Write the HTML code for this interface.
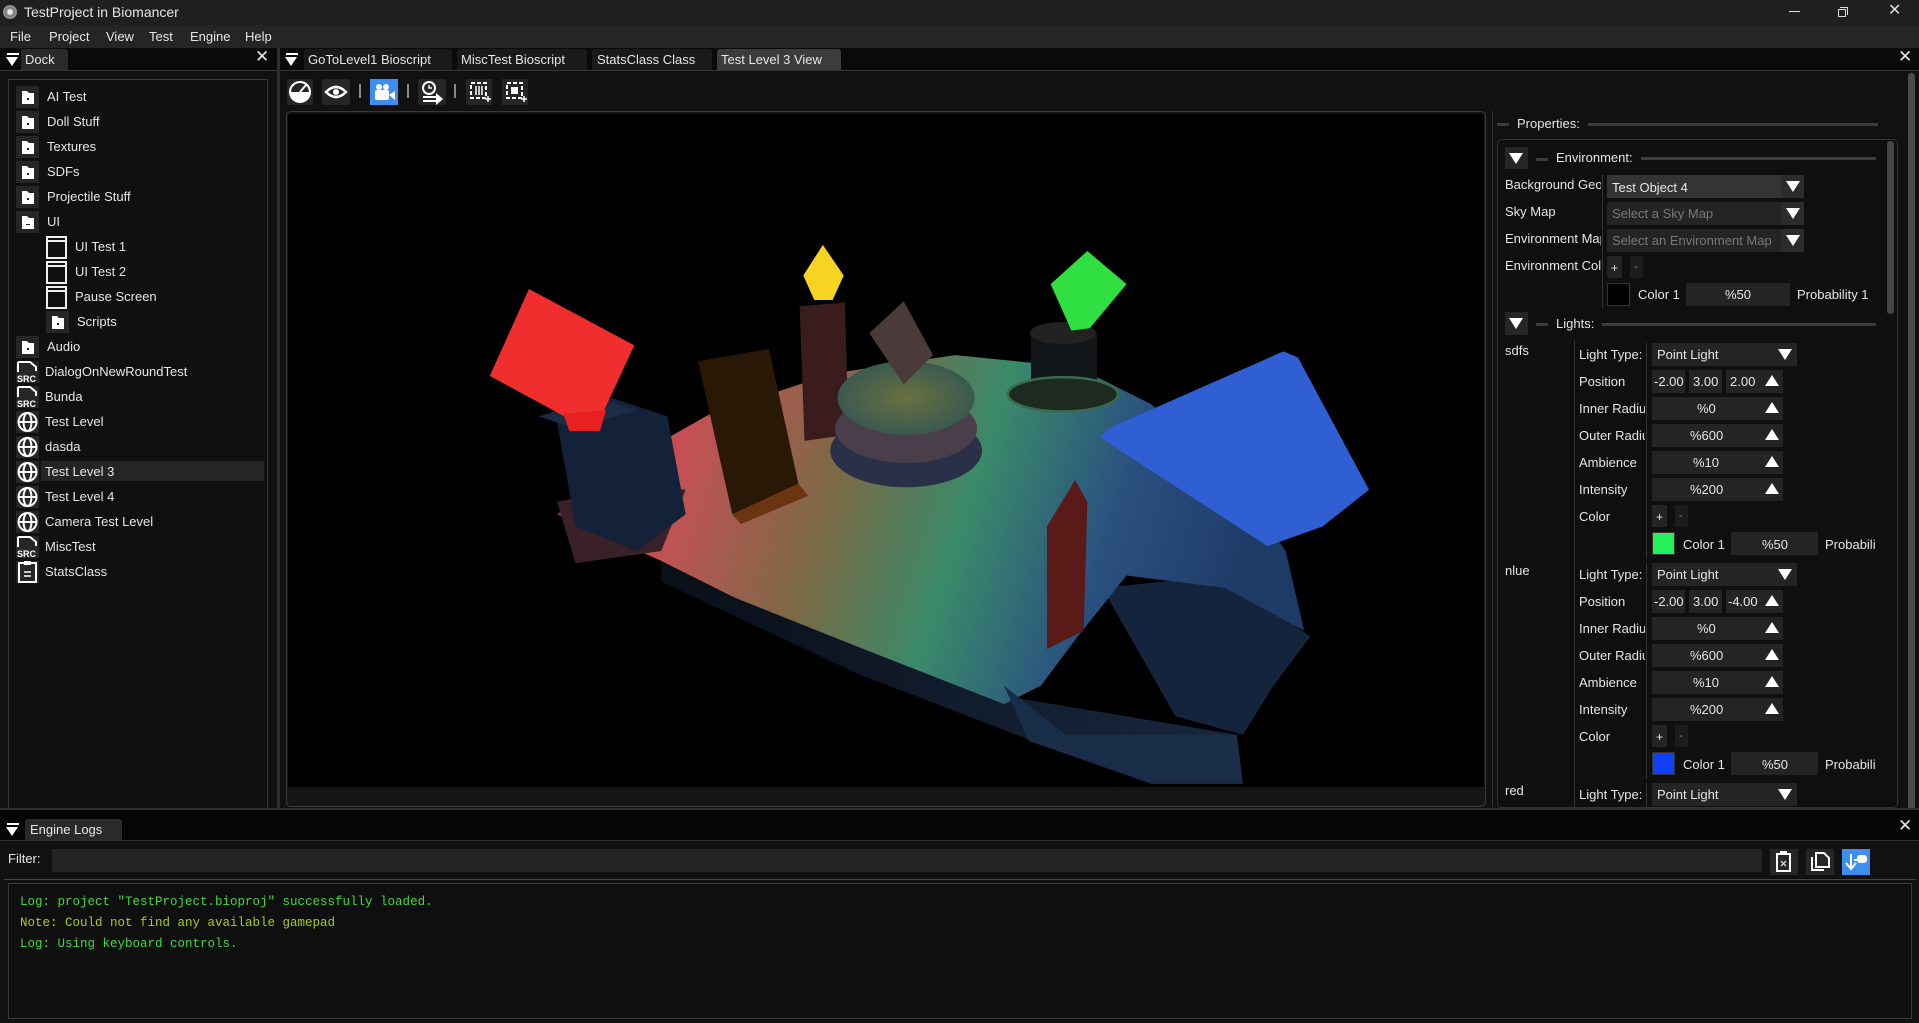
<!DOCTYPE html>
<html><head><meta charset="utf-8">
<style>
*{margin:0;padding:0;box-sizing:border-box}
html,body{width:1919px;height:1023px;overflow:hidden;background:#111;font-family:"Liberation Sans",sans-serif;color:#e6e6e6;font-size:13px}
.a{position:absolute}
.t{position:absolute;white-space:nowrap;line-height:16px}
.box{position:absolute;background:#242424}
.tri{position:absolute;width:0;height:0;border-left:7px solid transparent;border-right:7px solid transparent}
.dn{border-top:12px solid #fff}
.up{border-bottom:12px solid #fff}
.mono{font-family:"Liberation Mono",monospace;font-size:12.5px}
</style></head><body>
<!-- title bar -->
<div class="a" style="left:0;top:0;width:1919px;height:25px;background:#1f1f1f"></div>
<div class="a" style="left:3px;top:5px;width:14px;height:14px;border-radius:50%;background:radial-gradient(#eee 20%,#777 40%,#999 70%,#555)"></div>
<div class="t" style="left:24px;top:4px;font-size:14px">TestProject in Biomancer</div>
<div class="a" style="left:1789px;top:11px;width:11px;height:1px;background:#ddd"></div>
<div class="a" style="left:1838px;top:9px;width:8px;height:8px;border:1px solid #ddd"></div>
<div class="a" style="left:1840px;top:7px;width:8px;height:8px;border-top:1px solid #ddd;border-right:1px solid #ddd"></div>
<div class="t" style="left:1888px;top:3px;font-size:16px;color:#ddd">✕</div>
<!-- menu -->
<div class="a" style="left:0;top:25px;width:1919px;height:23px;background:#252525"></div>
<div class="t" style="left:10px;top:29px">File</div>
<div class="t" style="left:49px;top:29px">Project</div>
<div class="t" style="left:106px;top:29px">View</div>
<div class="t" style="left:149px;top:29px">Test</div>
<div class="t" style="left:190px;top:29px">Engine</div>
<div class="t" style="left:245px;top:29px">Help</div>
<!-- dock tab row -->
<div class="a" style="left:0;top:48px;width:1919px;height:22px;background:#0a0a0a"></div>
<div class="a" style="left:0;top:70px;width:1919px;height:1px;background:#333"></div>
<div class="a" style="left:7px;top:53px;width:12px;height:2px;background:#fff"></div>
<div class="tri dn" style="left:6px;top:57px;border-top-width:9px;border-left-width:6px;border-right-width:6px"></div>
<div class="a" style="left:21px;top:49px;width:47px;height:21px;background:#2a2a2a;border-radius:3px 3px 0 0"></div>
<div class="t" style="left:25px;top:52px">Dock</div>
<div class="t" style="left:255px;top:49px;font-size:17px">✕</div>
<div class="a" style="left:277px;top:48px;width:3px;height:762px;background:#2e2e2e"></div>
<div class="a" style="left:286px;top:53px;width:12px;height:2px;background:#fff"></div>
<div class="tri dn" style="left:285px;top:57px;border-top-width:9px;border-left-width:6px;border-right-width:6px"></div>
<div class="a" style="left:304px;top:49px;width:148px;height:21px;background:#1a1a1a;border-radius:3px 3px 0 0"></div>
<div class="t" style="left:308px;top:52px">GoToLevel1 Bioscript</div>
<div class="a" style="left:457px;top:49px;width:130px;height:21px;background:#1a1a1a;border-radius:3px 3px 0 0"></div>
<div class="t" style="left:461px;top:52px">MiscTest Bioscript</div>
<div class="a" style="left:592px;top:49px;width:120px;height:21px;background:#1a1a1a;border-radius:3px 3px 0 0"></div>
<div class="t" style="left:597px;top:52px">StatsClass Class</div>
<div class="a" style="left:717px;top:49px;width:124px;height:21px;background:#3c3c3c;border-radius:3px 3px 0 0"></div>
<div class="t" style="left:721px;top:52px">Test Level 3 View</div>
<div class="t" style="left:1898px;top:49px;font-size:17px">✕</div>
<!-- left list -->
<div class="a" style="left:8px;top:79px;width:260px;height:730px;border:1px solid #3a3a3a;background:#101010"></div>
<div class="a" style="left:41px;top:461px;width:223px;height:20px;background:#252525"></div>
<svg class="a" style="left:0;top:0" width="280" height="600">
<defs>
<g id="fold"><rect x="0" y="0" width="23" height="22" fill="#262626"/><path d="M6 5h5l2 2h5v11H6z" fill="#fff"/><rect x="11" y="12" width="2" height="2" fill="#222"/></g>
<g id="win"><rect x="2" y="1" width="19" height="21" fill="none" stroke="#eee" stroke-width="2"/><line x1="2" y1="5" x2="21" y2="5" stroke="#eee" stroke-width="2"/></g>
<g id="src"><rect x="0" y="0" width="23" height="22" fill="#262626"/><path d="M2 1h12l6 5v4M2 1v10" fill="none" stroke="#fff" stroke-width="2"/><text x="1" y="21" font-family="Liberation Sans" font-weight="bold" font-size="9" fill="#fff">SRC</text></g>
<g id="glob"><rect x="0" y="0" width="23" height="22" fill="#262626"/><circle cx="11.5" cy="11" r="9" fill="none" stroke="#fff" stroke-width="2"/><ellipse cx="11.5" cy="11" rx="4" ry="9" fill="none" stroke="#fff" stroke-width="2"/><line x1="2.5" y1="11" x2="20.5" y2="11" stroke="#fff" stroke-width="2"/></g>
</defs>
<use href="#fold" x="16" y="86"/><use href="#fold" x="16" y="111"/><use href="#fold" x="16" y="136"/><use href="#fold" x="16" y="161"/><use href="#fold" x="16" y="186"/>
<g transform="translate(16,211)"><rect width="23" height="22" fill="#262626"/><path d="M6 5h5l2 2h5v11H6z" fill="#fff"/><rect x="10" y="13" width="4" height="1" fill="#222"/></g>
<use href="#win" x="45" y="236"/><use href="#win" x="45" y="261"/><use href="#win" x="45" y="286"/>
<use href="#fold" x="46" y="311"/><use href="#fold" x="16" y="336"/>
<use href="#src" x="16" y="361"/><use href="#src" x="16" y="386"/>
<use href="#glob" x="16" y="411"/><use href="#glob" x="16" y="436"/><use href="#glob" x="16" y="461"/><use href="#glob" x="16" y="486"/><use href="#glob" x="16" y="511"/>
<use href="#src" x="16" y="536"/>
<g transform="translate(16,561)"><rect width="23" height="22" fill="#262626"/><rect x="3" y="2" width="17" height="19" fill="none" stroke="#fff" stroke-width="2"/><rect x="8" y="0" width="7" height="4" fill="#fff"/><line x1="8" y1="11" x2="15" y2="11" stroke="#fff" stroke-width="1.5"/><line x1="8" y1="15" x2="15" y2="15" stroke="#fff" stroke-width="1.5"/></g>
</svg>
<div class="t" style="left:47px;top:89px">AI Test</div>
<div class="t" style="left:47px;top:114px">Doll Stuff</div>
<div class="t" style="left:47px;top:139px">Textures</div>
<div class="t" style="left:47px;top:164px">SDFs</div>
<div class="t" style="left:47px;top:189px">Projectile Stuff</div>
<div class="t" style="left:47px;top:214px">UI</div>
<div class="t" style="left:75px;top:239px">UI Test 1</div>
<div class="t" style="left:75px;top:264px">UI Test 2</div>
<div class="t" style="left:75px;top:289px">Pause Screen</div>
<div class="t" style="left:77px;top:314px">Scripts</div>
<div class="t" style="left:47px;top:339px">Audio</div>
<div class="t" style="left:45px;top:364px">DialogOnNewRoundTest</div>
<div class="t" style="left:45px;top:389px">Bunda</div>
<div class="t" style="left:45px;top:414px">Test Level</div>
<div class="t" style="left:45px;top:439px">dasda</div>
<div class="t" style="left:45px;top:464px">Test Level 3</div>
<div class="t" style="left:45px;top:489px">Test Level 4</div>
<div class="t" style="left:45px;top:514px">Camera Test Level</div>
<div class="t" style="left:45px;top:539px">MiscTest</div>
<div class="t" style="left:45px;top:564px">StatsClass</div>
<!-- toolbar -->
<svg class="a" style="left:280px;top:72px" width="260" height="40">
<rect x="7" y="7" width="26" height="26" fill="#262626"/><circle cx="20" cy="20" r="10" fill="#fff"/><path d="M11 20a9 9 0 0 1 18 0z" fill="#262626"/><circle cx="20" cy="20" r="10" fill="none" stroke="#fff" stroke-width="2"/><line x1="20" y1="20" x2="26" y2="13" stroke="#fff" stroke-width="2"/>
<rect x="42" y="7" width="28" height="26" fill="#262626"/><path d="M46 20q10-10 20 0q-10 10-20 0z" fill="none" stroke="#fff" stroke-width="2.5"/><circle cx="56" cy="20" r="3" fill="#fff"/>
<rect x="79" y="12" width="2" height="14" fill="#888"/>
<rect x="90" y="7" width="28" height="26" fill="#3d8ef0"/><circle cx="99" cy="15" r="3" fill="#fff"/><circle cx="106" cy="15" r="3" fill="#fff"/><rect x="95" y="18" width="14" height="10" rx="2" fill="#fff"/><path d="M109 23l6-4v9z" fill="#fff"/>
<rect x="127" y="12" width="2" height="14" fill="#888"/>
<rect x="138" y="7" width="28" height="26" fill="#262626"/><circle cx="149" cy="16" r="6" fill="none" stroke="#fff" stroke-width="2"/><path d="M149 13v3h3" stroke="#fff" fill="none" stroke-width="1.5"/><path d="M143 25h13M143 29h13" stroke="#fff" stroke-width="2"/><path d="M156 21l7 6-7 6z" fill="#fff"/>
<rect x="174" y="12" width="2" height="14" fill="#888"/>
<rect x="186" y="7" width="26" height="26" fill="#262626"/><rect x="191" y="11" width="15" height="15" fill="none" stroke="#fff" stroke-width="2" stroke-dasharray="4 2"/><path d="M196 14v9M199 14v9M202 14v9" stroke="#fff" stroke-width="1.5"/><path d="M205 27h6M208 24v6" stroke="#fff" stroke-width="1.5"/>
<rect x="222" y="7" width="26" height="26" fill="#262626"/><rect x="227" y="11" width="15" height="15" fill="none" stroke="#fff" stroke-width="2" stroke-dasharray="4 2"/><rect x="231" y="15" width="7" height="7" fill="#fff"/><path d="M241 27h6M244 24v6" stroke="#fff" stroke-width="1.5"/>
</svg>
<!-- viewport -->
<div class="a" style="left:286px;top:111px;width:1200px;height:696px;border:1px solid #3a3a3a;border-radius:5px;background:#151515"></div>
<svg class="a" style="left:288px;top:114px" width="1196" height="673" viewBox="235.2 93.1 976.7 549.6" preserveAspectRatio="none">
<defs>
<linearGradient id="top" x1="0" y1="0" x2="1" y2="0.15"><stop offset="0" stop-color="#6a2a35"/><stop offset="0.2" stop-color="#c85055"/><stop offset="0.42" stop-color="#7a6a45"/><stop offset="0.6" stop-color="#3a8a6a"/><stop offset="0.8" stop-color="#2a5080"/><stop offset="1" stop-color="#1e3a66"/></linearGradient>
<linearGradient id="side" x1="0" y1="0" x2="1" y2="0"><stop offset="0" stop-color="#0a0f18"/><stop offset="1" stop-color="#17283f"/></linearGradient>
<radialGradient id="cyl"><stop offset="0" stop-color="#6a7040"/><stop offset="1" stop-color="#3a5a50"/></radialGradient>
</defs>
<rect x="235" y="93" width="977" height="550" fill="#000"/>
<!-- front dark side -->
<polygon points="540,455 700,520 830,570 1010,600 1015,640 940,640 830,600 700,550 540,475" fill="url(#side)"/>
<!-- right dark block -->
<polygon points="1000,470 1070,520 1040,560 1015,600 960,585 900,480" fill="#14243c"/>
<!-- top surface -->
<polygon points="455,420 520,372 580,338 680,305 780,290 880,300 940,330 1000,380 1050,450 1065,515 1000,480 920,470 880,520 850,560 820,575 700,528 600,488 540,458" fill="url(#top)"/>
<!-- bottom stacked slabs -->
<polygon points="820,560 870,600 1010,600 1015,640 940,640 840,605" fill="#1a2d48"/>
<!-- left base ledges -->
<polygon points="455,410 520,395 560,400 540,450 470,460" fill="#3a2028"/>
<!-- left pillar -->
<polygon points="455,345 500,325 545,340 560,420 520,450 470,430" fill="#132238"/>
<polygon points="440,340 490,325 520,335 470,350" fill="#1c2c44"/>
<!-- red diamond -->
<polygon points="432,236 518,282 492,338 470,345 400,307" fill="#f02e2e"/>
<polygon points="460,338 495,335 490,352 465,352" fill="#e82020"/>
<!-- brown box -->
<polygon points="570,295 628,285 652,395 598,420" fill="#2a1806"/>
<polygon points="598,420 652,395 660,405 605,428" fill="#6a3510"/>
<!-- yellow pillar + diamond -->
<polygon points="653,250 690,247 693,355 657,360" fill="#3a1c1c"/>
<polygon points="672,200 689,225 680,245 665,245 656,225" fill="#f5d422"/>
<!-- cylinder -->
<ellipse cx="740" cy="368" rx="62" ry="30" fill="#2a3048"/>
<ellipse cx="740" cy="350" rx="58" ry="28" fill="#4a3e4a"/>
<ellipse cx="740" cy="325" rx="56" ry="30" fill="url(#cyl)"/>
<polygon points="710,272 738,246 762,290 738,314" fill="#4a3a3a"/>
<!-- green pillar -->
<rect x="842" y="272" width="54" height="45" fill="#121618"/>
<ellipse cx="868" cy="272" rx="27" ry="9" fill="#222"/>
<ellipse cx="868" cy="322" rx="45" ry="14" fill="#1c2a22" stroke="#3a6a4a" stroke-width="2"/>
<polygon points="888,205 920,232 890,268 875,270 858,232" fill="#30e042"/>
<!-- red wedge -->
<polygon points="878,392 888,410 885,515 855,530 855,430" fill="#5a1a18"/>
<!-- blue cube -->
<polygon points="1048,287 1060,292 1118,400 1080,430 1035,446 898,357 905,350" fill="#2f5fd2"/>
</svg>
<!-- properties -->
<div class="a" style="left:1492px;top:111px;width:1px;height:696px;background:#333"></div>
<div class="a" style="left:1497px;top:123px;width:12px;height:3px;background:#3c3c3c"></div>
<div class="t" style="left:1517px;top:116px">Properties:</div>
<div class="a" style="left:1588px;top:123px;width:290px;height:3px;background:#3c3c3c"></div>
<div class="a" style="left:1497px;top:139px;width:401px;height:669px;border:1px solid #333;border-radius:5px;background:#0f0f0f"></div>
<div class="a" style="left:1887px;top:141px;width:7px;height:173px;background:#444;border-radius:3px"></div>
<div class="a" style="left:1908px;top:73px;width:7px;height:737px;background:#4a4a4a;border-radius:3px"></div>
<div class="a" style="left:1505px;top:147px;width:23px;height:22px;background:#262626"></div>
<div class="tri dn" style="left:1509px;top:153px;border-top-width:11px"></div>
<div class="a" style="left:1536px;top:158px;width:12px;height:3px;background:#3c3c3c"></div>
<div class="t" style="left:1556px;top:150px">Environment:</div>
<div class="a" style="left:1641px;top:157px;width:235px;height:3px;background:#3c3c3c"></div>
<div class="a" style="left:1602px;top:175px;width:1px;height:133px;background:#333"></div>
<div class="t" style="left:1505px;top:177px;width:96px;overflow:hidden">Background Geometry</div>
<div class="t" style="left:1505px;top:204px">Sky Map</div>
<div class="t" style="left:1505px;top:231px;width:96px;overflow:hidden">Environment Map</div>
<div class="t" style="left:1505px;top:258px;width:96px;overflow:hidden">Environment Color</div>
<div class="box" style="left:1607px;top:175px;width:175px;height:23px;background:#343434"></div><div class="box" style="left:1781px;top:175px;width:23px;height:23px;background:#2c2c2c"></div><div class="tri dn" style="left:1786px;top:181px;border-top-width:11px"></div>
<div class="t" style="left:1612px;top:180px">Test Object 4</div>
<div class="box" style="left:1607px;top:202px;width:175px;height:23px"></div><div class="box" style="left:1781px;top:202px;width:23px;height:23px;background:#2c2c2c"></div><div class="tri dn" style="left:1786px;top:208px;border-top-width:11px"></div>
<div class="t" style="left:1612px;top:206px;color:#777">Select a Sky Map</div>
<div class="box" style="left:1607px;top:229px;width:175px;height:23px"></div><div class="box" style="left:1781px;top:229px;width:23px;height:23px;background:#2c2c2c"></div><div class="tri dn" style="left:1786px;top:235px;border-top-width:11px"></div>
<div class="t" style="left:1612px;top:233px;color:#777">Select an Environment Map</div>
<div class="box" style="left:1607px;top:256px;width:15px;height:22px"></div><div class="t" style="left:1611px;top:260px;font-size:12px">+</div>
<div class="box" style="left:1630px;top:256px;width:13px;height:22px;background:#1c1c1c"></div><div class="t" style="left:1634px;top:259px;font-size:11px;color:#888">-</div>
<div class="a" style="left:1607px;top:283px;width:23px;height:23px;background:#000;border:1px solid #333"></div>
<div class="t" style="left:1638px;top:287px">Color 1</div>
<div class="box" style="left:1686px;top:283px;width:104px;height:23px"></div><div class="t" style="left:1725px;top:287px">%50</div>
<div class="t" style="left:1797px;top:287px">Probability 1</div>
<div class="a" style="left:1505px;top:312px;width:23px;height:23px;background:#262626"></div>
<div class="tri dn" style="left:1509px;top:318px;border-top-width:11px"></div>
<div class="a" style="left:1536px;top:323px;width:12px;height:3px;background:#3c3c3c"></div>
<div class="t" style="left:1556px;top:316px">Lights:</div>
<div class="a" style="left:1602px;top:323px;width:274px;height:3px;background:#3c3c3c"></div>
<div class="a" style="left:1574px;top:340px;width:1px;height:467px;background:#333"></div>
<div class="t" style="left:1505px;top:343px">sdfs</div>
<div class="t" style="left:1505px;top:563px">nlue</div>
<div class="t" style="left:1505px;top:783px">red</div>
<div class="a" style="left:1646px;top:343px;width:1px;height:216px;background:#333"></div>
<div class="a" style="left:1646px;top:563px;width:1px;height:216px;background:#333"></div>
<div class="a" style="left:1646px;top:783px;width:1px;height:24px;background:#333"></div>
<!-- light 1 -->
<div class="t" style="left:1579px;top:347px">Light Type:</div>
<div class="box" style="left:1652px;top:343px;width:145px;height:23px"></div><div class="tri dn" style="left:1778px;top:349px;border-top-width:11px"></div><div class="t" style="left:1657px;top:347px">Point Light</div>
<div class="t" style="left:1579px;top:374px">Position</div>
<div class="box" style="left:1652px;top:370px;width:33px;height:23px"></div><div class="t" style="left:1654px;top:374px">-2.00</div>
<div class="box" style="left:1689px;top:370px;width:33px;height:23px"></div><div class="t" style="left:1693px;top:374px">3.00</div>
<div class="box" style="left:1726px;top:370px;width:57px;height:23px"></div><div class="t" style="left:1730px;top:374px">2.00</div><div class="tri up" style="left:1765px;top:375px;border-bottom-width:11px"></div>
<div class="t" style="left:1579px;top:401px;width:66px;overflow:hidden">Inner Radius</div>
<div class="box" style="left:1652px;top:397px;width:131px;height:23px"></div><div class="t" style="left:1697px;top:401px">%0</div><div class="tri up" style="left:1765px;top:402px;border-bottom-width:11px"></div>
<div class="t" style="left:1579px;top:428px;width:66px;overflow:hidden">Outer Radius</div>
<div class="box" style="left:1652px;top:424px;width:131px;height:23px"></div><div class="t" style="left:1690px;top:428px">%600</div><div class="tri up" style="left:1765px;top:429px;border-bottom-width:11px"></div>
<div class="t" style="left:1579px;top:455px">Ambience</div>
<div class="box" style="left:1652px;top:451px;width:131px;height:23px"></div><div class="t" style="left:1693px;top:455px">%10</div><div class="tri up" style="left:1765px;top:456px;border-bottom-width:11px"></div>
<div class="t" style="left:1579px;top:482px">Intensity</div>
<div class="box" style="left:1652px;top:478px;width:131px;height:23px"></div><div class="t" style="left:1690px;top:482px">%200</div><div class="tri up" style="left:1765px;top:483px;border-bottom-width:11px"></div>
<div class="t" style="left:1579px;top:509px">Color</div>
<div class="box" style="left:1652px;top:505px;width:15px;height:22px"></div><div class="t" style="left:1656px;top:509px;font-size:12px">+</div>
<div class="box" style="left:1675px;top:505px;width:13px;height:22px;background:#1c1c1c"></div><div class="t" style="left:1679px;top:508px;font-size:11px;color:#888">-</div>
<div class="a" style="left:1652px;top:532px;width:23px;height:23px;background:#25f05a;border:1px solid #333"></div>
<div class="t" style="left:1683px;top:537px">Color 1</div>
<div class="box" style="left:1731px;top:532px;width:87px;height:23px"></div><div class="t" style="left:1762px;top:537px">%50</div>
<div class="t" style="left:1825px;top:537px">Probabili</div>
<!-- light 2 -->
<div class="t" style="left:1579px;top:567px">Light Type:</div>
<div class="box" style="left:1652px;top:563px;width:145px;height:23px"></div><div class="tri dn" style="left:1778px;top:569px;border-top-width:11px"></div><div class="t" style="left:1657px;top:567px">Point Light</div>
<div class="t" style="left:1579px;top:594px">Position</div>
<div class="box" style="left:1652px;top:590px;width:33px;height:23px"></div><div class="t" style="left:1654px;top:594px">-2.00</div>
<div class="box" style="left:1689px;top:590px;width:33px;height:23px"></div><div class="t" style="left:1693px;top:594px">3.00</div>
<div class="box" style="left:1726px;top:590px;width:57px;height:23px"></div><div class="t" style="left:1728px;top:594px">-4.00</div><div class="tri up" style="left:1765px;top:595px;border-bottom-width:11px"></div>
<div class="t" style="left:1579px;top:621px;width:66px;overflow:hidden">Inner Radius</div>
<div class="box" style="left:1652px;top:617px;width:131px;height:23px"></div><div class="t" style="left:1697px;top:621px">%0</div><div class="tri up" style="left:1765px;top:622px;border-bottom-width:11px"></div>
<div class="t" style="left:1579px;top:648px;width:66px;overflow:hidden">Outer Radius</div>
<div class="box" style="left:1652px;top:644px;width:131px;height:23px"></div><div class="t" style="left:1690px;top:648px">%600</div><div class="tri up" style="left:1765px;top:649px;border-bottom-width:11px"></div>
<div class="t" style="left:1579px;top:675px">Ambience</div>
<div class="box" style="left:1652px;top:671px;width:131px;height:23px"></div><div class="t" style="left:1693px;top:675px">%10</div><div class="tri up" style="left:1765px;top:676px;border-bottom-width:11px"></div>
<div class="t" style="left:1579px;top:702px">Intensity</div>
<div class="box" style="left:1652px;top:698px;width:131px;height:23px"></div><div class="t" style="left:1690px;top:702px">%200</div><div class="tri up" style="left:1765px;top:703px;border-bottom-width:11px"></div>
<div class="t" style="left:1579px;top:729px">Color</div>
<div class="box" style="left:1652px;top:725px;width:15px;height:22px"></div><div class="t" style="left:1656px;top:729px;font-size:12px">+</div>
<div class="box" style="left:1675px;top:725px;width:13px;height:22px;background:#1c1c1c"></div><div class="t" style="left:1679px;top:728px;font-size:11px;color:#888">-</div>
<div class="a" style="left:1652px;top:752px;width:23px;height:23px;background:#1040f8;border:1px solid #333"></div>
<div class="t" style="left:1683px;top:757px">Color 1</div>
<div class="box" style="left:1731px;top:752px;width:87px;height:23px"></div><div class="t" style="left:1762px;top:757px">%50</div>
<div class="t" style="left:1825px;top:757px">Probabili</div>
<!-- light 3 -->
<div class="t" style="left:1579px;top:787px">Light Type:</div>
<div class="box" style="left:1652px;top:783px;width:145px;height:23px"></div><div class="tri dn" style="left:1778px;top:789px;border-top-width:11px"></div><div class="t" style="left:1657px;top:787px">Point Light</div>
<!-- bottom logs -->
<div class="a" style="left:0;top:808px;width:1919px;height:2px;background:#2e2e2e"></div>
<div class="a" style="left:0;top:810px;width:1919px;height:31px;background:#050505"></div>
<div class="a" style="left:0;top:840px;width:1919px;height:1px;background:#333"></div>
<div class="a" style="left:7px;top:823px;width:12px;height:2px;background:#fff"></div>
<div class="tri dn" style="left:6px;top:827px;border-top-width:9px;border-left-width:6px;border-right-width:6px"></div>
<div class="a" style="left:25px;top:819px;width:97px;height:21px;background:#2a2a2a;border-radius:3px 3px 0 0"></div>
<div class="t" style="left:30px;top:822px">Engine Logs</div>
<div class="t" style="left:1898px;top:818px;font-size:17px">✕</div>
<div class="t" style="left:8px;top:851px">Filter:</div>
<div class="box" style="left:52px;top:849px;width:1710px;height:23px"></div>
<svg class="a" style="left:1768px;top:848px" width="110" height="30">
<rect x="2" y="1" width="28" height="26" fill="#262626"/><rect x="9" y="6" width="13" height="17" fill="none" stroke="#fff" stroke-width="2"/><rect x="12" y="3" width="7" height="4" fill="#fff"/><path d="M13 13l5 5M18 13l-5 5" stroke="#ccc" stroke-width="1.5"/>
<rect x="38" y="1" width="28" height="26" fill="#262626"/><path d="M44 9v13h12" fill="none" stroke="#fff" stroke-width="2"/><path d="M48 5h8l5 5v9H48z" fill="none" stroke="#fff" stroke-width="2"/>
<rect x="74" y="1" width="28" height="26" fill="#3d8ef0"/><path d="M83 6v14M78 15l5 6 5-6" fill="none" stroke="#fff" stroke-width="2"/><rect x="89" y="7" width="10" height="8" rx="3" fill="#fff"/><path d="M86 12h4" stroke="#fff" stroke-width="2"/>
</svg>
<div class="a" style="left:4px;top:879px;width:1912px;height:1px;background:#444"></div>
<div class="a" style="left:8px;top:883px;width:1904px;height:136px;border:1px solid #3a3a3a;background:#0f0f0f"></div>
<div class="t mono" style="left:20px;top:894px;color:#3fd83f">Log: project "TestProject.bioproj" successfully loaded.</div>
<div class="t mono" style="left:20px;top:915px;color:#a8cc1a">Note: Could not find any available gamepad</div>
<div class="t mono" style="left:20px;top:936px;color:#3fd83f">Log: Using keyboard controls.</div>
</body></html>
